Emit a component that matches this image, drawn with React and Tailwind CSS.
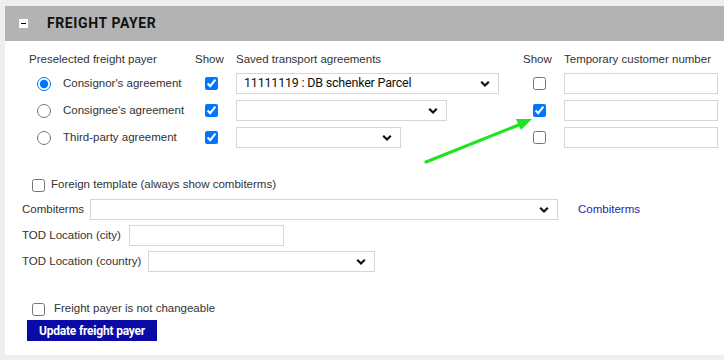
import React from "react";

const sans = { fontFamily: '"Liberation Sans", Arial, sans-serif' };
const narrow = { fontFamily: 'Roboto, "Liberation Sans", sans-serif' };

const Chevron = () => (
  <svg width="10" height="7" viewBox="0 0 10 7" className="absolute right-[8px] top-1/2 -translate-y-1/2 pointer-events-none">
    <polyline points="1.2,1.2 5,5 8.8,1.2" fill="none" stroke="#111" strokeWidth="2.2" />
  </svg>
);

const Select = ({ width, value }) => (
  <div className="relative h-[21px] bg-white border border-[#d6d6d6]" style={{ width }}>
    <div className="h-full flex items-center pl-[7px] text-[12.5px] tracking-[-0.2px] text-[#111] whitespace-nowrap" style={narrow}>
      {value}
    </div>
    <Chevron />
  </div>
);

const TextBox = ({ width }) => (
  <div className="h-[21px] bg-white border border-[#d6d6d6]" style={{ width }} />
);

const Check = ({ checked }) => (
  <input type="checkbox" defaultChecked={checked} className="m-0 w-[13px] h-[13px] block" />
);

const rows = [
  { label: "Consignor's agreement", selected: true, sel: 263, value: "11111119 : DB schenker Parcel", show2: false },
  { label: "Consignee's agreement", selected: false, sel: 211, value: "", show2: true },
  { label: "Third-party agreement", selected: false, sel: 165, value: "", show2: false },
];

export default function App() {
  return (
    <div className="min-h-[360px] bg-[#efefef] pt-[6px] pl-[5px]">
      <div className="relative bg-white">
        <div className="h-[35px] bg-[#b3b3b3] flex items-center">
          <div className="ml-[14px] w-[9px] h-[9px] bg-white flex items-center justify-center">
            <div className="w-[5px] h-[1px] bg-black" />
          </div>
          <div className="ml-[19px] text-[14px] font-bold tracking-[0.6px] text-[#111] whitespace-nowrap" style={narrow}>
            FREIGHT PAYER
          </div>
        </div>

        <div className="pl-[24px] pt-[11px] text-[11.5px] text-[#333] whitespace-nowrap" style={sans}>
          <div className="grid grid-cols-[166px_41px_287px_41px_154px] gap-y-[6px] items-center">
            <div className="h-[15px] leading-[15px]">Preselected freight payer</div>
            <div className="leading-[15px]">Show</div>
            <div className="leading-[15px]">Saved transport agreements</div>
            <div className="leading-[15px]">Show</div>
            <div className="leading-[15px]">Temporary customer number</div>
            {rows.map((r) => (
              <React.Fragment key={r.label}>
                <div className="flex items-center h-[21px]">
                  <input type="radio" name="payer" defaultChecked={r.selected} className="m-0 ml-[8px] w-[14px] h-[14px] block" />
                  <span className="ml-[12px]">{r.label}</span>
                </div>
                <div className="pl-[10px]">
                  <Check checked />
                </div>
                <div>
                  <Select width={r.sel} value={r.value} />
                </div>
                <div className="pl-[10px]">
                  <Check checked={r.show2} />
                </div>
                <div>
                  <TextBox width={154} />
                </div>
              </React.Fragment>
            ))}
          </div>
        </div>

        <div className="pl-[17px] pb-[14px] text-[11.5px] text-[#333] whitespace-nowrap" style={sans}>
          <div className="mt-[29px] h-[16px] flex items-center pl-[10px]">
            <Check />
            <span className="ml-[6px]">Foreign template (always show combiterms)</span>
          </div>
          <div className="mt-[6px] flex items-center gap-[6px]">
            <span>Combiterms</span>
            <Select width={468} value="" />
            <span className="ml-[14px] text-[#2323b4]">Combiterms</span>
          </div>
          <div className="mt-[5px] flex items-center gap-[8px]">
            <span>TOD Location (city)</span>
            <TextBox width={155} />
          </div>
          <div className="mt-[5px] flex items-center gap-[7px]">
            <span>TOD Location (country)</span>
            <Select width={227} value="" />
          </div>
          <div className="mt-[29px] h-[16px] flex items-center pl-[10px]">
            <Check />
            <span className="ml-[9px]">Freight payer is not changeable</span>
          </div>
          <div className="mt-[3px] ml-[5px] w-[130px] h-[21px] bg-[#0a0aa6] text-white font-bold text-[12px] tracking-[-0.2px] flex items-center justify-center" style={narrow}>
            Update freight payer
          </div>
        </div>

        <svg className="absolute left-0 top-0 pointer-events-none" width="724" height="360">
          <line x1="421" y1="156" x2="516" y2="118" stroke="#1ee61e" strokeWidth="3.2" strokeLinecap="round" />
          <polygon points="527,113 511,113 516,124" fill="#1ee61e" />
        </svg>
      </div>
    </div>
  );
}
